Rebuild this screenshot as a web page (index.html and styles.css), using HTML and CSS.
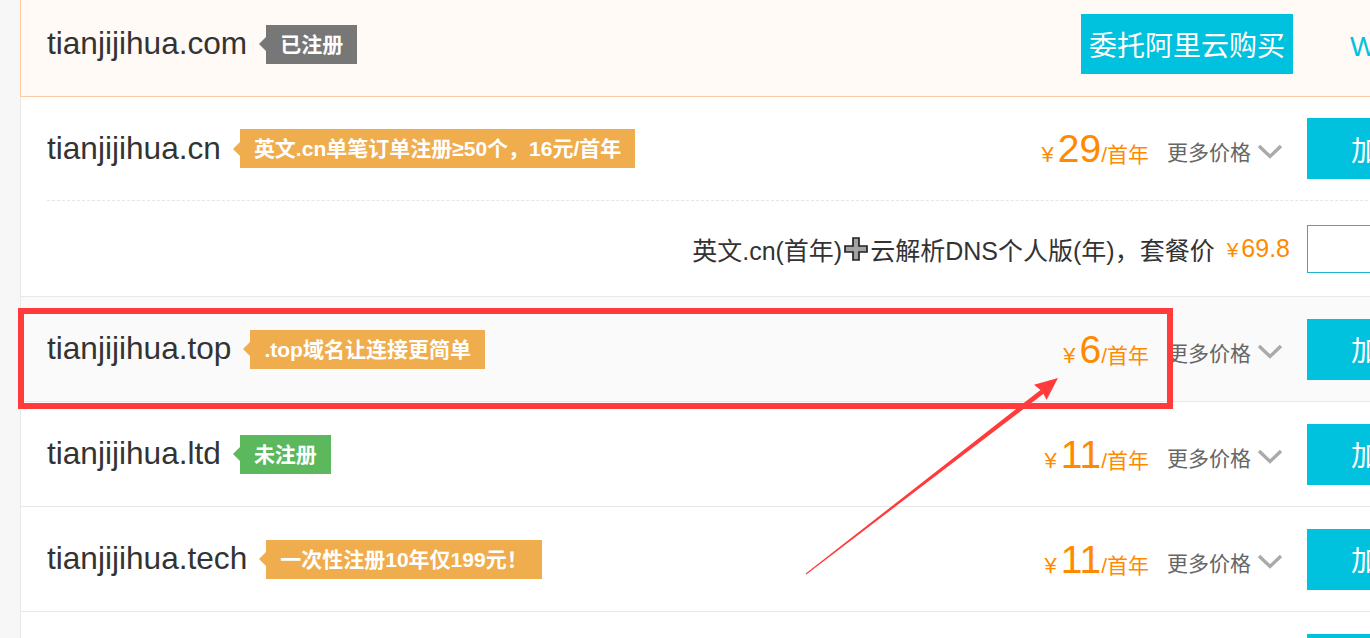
FILE: index.html
```html
<!DOCTYPE html>
<html lang="zh-CN">
<head>
    <meta charset="UTF-8">
    <title>域名查询结果</title>
    <link rel="stylesheet" href="styles.css">
</head>
<body>
<div class="page">
    <div class="list">
        <div class="row row-taken">
            <span class="domain">tianjijihua.com</span>
            <span class="tag tag-gray">已注册</span>
            <div class="actions">
                <a class="btn btn-entrust" href="#">委托阿里云购买</a>
                <a class="whois" href="#">WHOIS信息</a>
            </div>
        </div>

        <div class="group">
            <div class="row row-main">
                <span class="domain">tianjijihua.cn</span>
                <span class="tag tag-orange">英文.cn单笔订单注册≥50个，16元/首年</span>
                <div class="price"><span class="yen">¥</span><span class="num">29</span><span class="unit">/首年</span></div>
                <div class="more">更多价格
                    <svg width="26" height="15" viewBox="0 0 26 15"><polyline points="2,2 13,12.5 24,2" fill="none" stroke="#aaa" stroke-width="3.4"/></svg>
                </div>
                <a class="btn btn-add" href="#">加入清单</a>
            </div>
            <div class="package">
                <span>英文.cn(首年)</span>
                <svg class="plus" width="24" height="24" viewBox="0 0 24 24"><polygon points="9,1 15,1 15,9 23,9 23,15 15,15 15,23 9,23 9,15 1,15 1,9 9,9" fill="#a3a3a3" stroke="#222" stroke-width="1.7"/></svg>
                <span>云解析DNS个人版(年)，套餐价</span>
                <span class="pkg-price"><span class="yen">¥</span>69.8</span>
                <a class="btn btn-outline" href="#"></a>
            </div>
        </div>

        <div class="row row-hl">
            <span class="domain">tianjijihua.top</span>
            <span class="tag tag-orange">.top域名让连接更简单</span>
            <div class="price"><span class="yen">¥</span><span class="num">6</span><span class="unit">/首年</span></div>
            <div class="more">更多价格
                <svg width="26" height="15" viewBox="0 0 26 15"><polyline points="2,2 13,12.5 24,2" fill="none" stroke="#aaa" stroke-width="3.4"/></svg>
            </div>
            <a class="btn btn-add" href="#">加入清单</a>
        </div>

        <div class="row">
            <span class="domain">tianjijihua.ltd</span>
            <span class="tag tag-green">未注册</span>
            <div class="price"><span class="yen">¥</span><span class="num">11</span><span class="unit">/首年</span></div>
            <div class="more">更多价格
                <svg width="26" height="15" viewBox="0 0 26 15"><polyline points="2,2 13,12.5 24,2" fill="none" stroke="#aaa" stroke-width="3.4"/></svg>
            </div>
            <a class="btn btn-add" href="#">加入清单</a>
        </div>

        <div class="row">
            <span class="domain">tianjijihua.tech</span>
            <span class="tag tag-orange">一次性注册10年仅199元！</span>
            <div class="price"><span class="yen">¥</span><span class="num">11</span><span class="unit">/首年</span></div>
            <div class="more">更多价格
                <svg width="26" height="15" viewBox="0 0 26 15"><polyline points="2,2 13,12.5 24,2" fill="none" stroke="#aaa" stroke-width="3.4"/></svg>
            </div>
            <a class="btn btn-add" href="#">加入清单</a>
        </div>

        <div class="row">
            <span class="domain">tianjijihua.xyz</span>
            <div class="price"><span class="yen">¥</span><span class="num">8</span><span class="unit">/首年</span></div>
            <div class="more">更多价格
                <svg width="26" height="15" viewBox="0 0 26 15"><polyline points="2,2 13,12.5 24,2" fill="none" stroke="#aaa" stroke-width="3.4"/></svg>
            </div>
            <a class="btn btn-add" href="#">加入清单</a>
        </div>
    </div>

    <!-- annotation drawn over the screenshot -->
    <div class="mark-box"></div>
    <svg class="mark-arrow" width="1370" height="638" viewBox="0 0 1370 638">
        <polygon points="805.7,573.6 1040.5,389.9 1034,384.8 1058,378 1046.5,400 1043.5,393.8 806.3,574.4" fill="#ff3b3b"/>
    </svg>
</div>
</body>
</html>
```

FILE: styles.css
```css
/* General Styles */
body {
    margin: 0;
    padding: 0;
    font-family: 'Liberation Sans', 'Noto Sans CJK SC', sans-serif;
    color: #333;
}

a {
    text-decoration: none;
}

.page {
    position: relative;
    width: 1370px;
    height: 638px;
    overflow: hidden;
    background-color: #f7f7f7;
}

.list {
    margin-left: 20px;
    width: 1513px;
    background-color: #fff;
}

/* Rows */
.row {
    display: flex;
    align-items: center;
    height: 104px;
    padding: 0 26px;
    border-left: 1px solid #e8e8e8;
    border-bottom: 1px solid #e8e8e8;
}

.row-taken {
    height: 88px;
    padding-bottom: 8px;
    background-color: #fffaf5;
    border-left-color: #fcc9a0;
    border-bottom-color: #fcc9a0;
}

.row-hl {
    background-color: #fafafa;
}

.group {
    border-left: 1px solid #e8e8e8;
    border-bottom: 1px solid #e8e8e8;
}

.group .row-main {
    height: 103px;
    border: none;
}

.domain {
    font-size: 31.6px;
    line-height: 1;
    color: #333;
    white-space: nowrap;
}

/* Tags */
.tag {
    position: relative;
    margin-left: 19px;
    height: 39px;
    line-height: 39px;
    padding: 0 14px;
    font-size: 21px;
    font-weight: bold;
    color: #fff;
    white-space: nowrap;
}

.tag::before {
    content: '';
    position: absolute;
    left: -7px;
    top: 50%;
    margin-top: -7px;
    border-style: solid;
    border-width: 7px 7px 7px 0;
    border-color: transparent;
}

.tag-gray { background-color: #777; }
.tag-gray::before { border-right-color: #777; }
.tag-orange { background-color: #f0ad4e; }
.tag-orange::before { border-right-color: #f0ad4e; }
.tag-green { background-color: #5cb85c; }
.tag-green::before { border-right-color: #5cb85c; }

/* Price and actions */
.price {
    margin-left: auto;
    display: flex;
    align-items: baseline;
    color: #ff8a00;
    line-height: 1;
}

.price .yen {
    font-size: 22px;
    margin-right: 4px;
}

.price .num {
    font-size: 39px;
}

.price .unit {
    font-size: 21px;
}

.more {
    display: flex;
    align-items: center;
    margin-left: 18px;
    padding-top: 5px;
    font-size: 21px;
    color: #666;
    white-space: nowrap;
}

.more svg {
    margin-left: 6px;
}

.btn {
    display: flex;
    align-items: center;
    justify-content: center;
    box-sizing: border-box;
    color: #fff;
    white-space: nowrap;
}

.btn-add {
    margin-left: 24px;
    width: 200px;
    height: 61px;
    font-size: 28px;
    background-color: #00c1de;
}

.actions {
    margin-left: auto;
    display: flex;
    align-items: center;
}

.btn-entrust {
    width: 212px;
    height: 60px;
    font-size: 28px;
    background-color: #00c1de;
}

.whois {
    width: 157px;
    margin-left: 57px;
    font-size: 28px;
    color: #00c1de;
    white-space: nowrap;
    overflow: hidden;
}

/* Package row */
.package {
    display: flex;
    align-items: center;
    justify-content: flex-end;
    height: 95px;
    margin-left: 26px;
    padding-right: 26px;
    border-top: 1px dashed #e5e5e5;
    font-size: 25px;
    color: #333;
    white-space: nowrap;
}

.package .plus {
    margin: 0 2px;
}

.pkg-price {
    margin-left: 12px;
    color: #ff8a00;
}

.pkg-price .yen {
    font-size: 21px;
    margin-right: 3px;
}

.btn-outline {
    margin-left: 17px;
    width: 200px;
    height: 48px;
    border: 1px solid #1fb5d0;
}

/* Annotation */
.mark-box {
    position: absolute;
    left: 18px;
    top: 308px;
    width: 1155px;
    height: 101px;
    box-sizing: border-box;
    border: 6px solid #ff3b3b;
}

.mark-arrow {
    position: absolute;
    left: 0;
    top: 0;
    pointer-events: none;
}
```
